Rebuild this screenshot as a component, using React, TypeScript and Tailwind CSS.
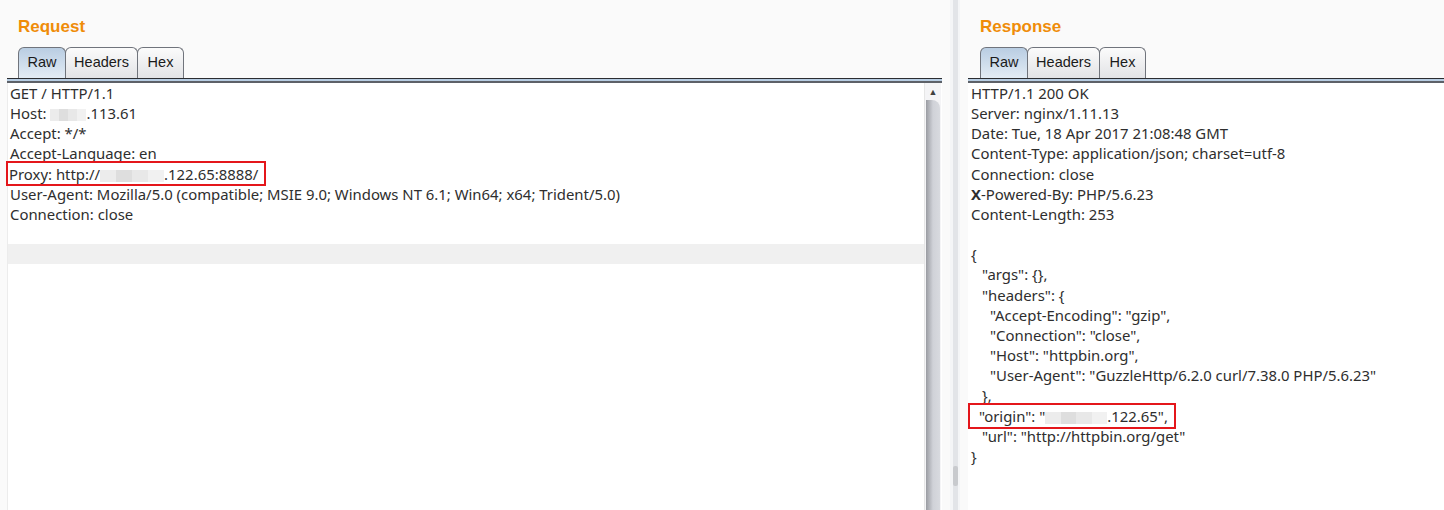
import React from "react";

const FONT = { fontFamily: '"Noto Sans", "Open Sans", sans-serif' };

function Blur({ w }: { w: number }) {
  return (
    <span className="inline-block align-middle h-[12px] relative" style={{ width: w }}>
      <span className="absolute inset-0 flex">
        <span className="flex-1 bg-[#ececec]" />
        <span className="flex-1 bg-[#dedede]" />
        <span className="flex-1 bg-[#e8e8e8]" />
        <span className="flex-1 bg-[#f1f1f1]" />
      </span>
    </span>
  );
}

function Tabs() {
  const base =
    "h-[31px] flex items-center text-[14.5px] text-[#1a1a1a] border border-b-0 border-[#70747c] rounded-t-[6px] -ml-px first:ml-0";
  return (
    <div className="flex items-end" style={{ fontFamily: '"Liberation Sans", Arial, sans-serif' }}>
      <div className={base + " w-[48px] justify-center bg-gradient-to-b from-[#b9cde2] to-[#e3ecf5]"}>Raw</div>
      <div className={base + " w-[73px] justify-center bg-gradient-to-b from-[#fbfbfb] to-[#e2e3e6]"}>Headers</div>
      <div className={base + " w-[47px] justify-center bg-gradient-to-b from-[#fbfbfb] to-[#e2e3e6]"}>Hex</div>
    </div>
  );
}

function Separator() {
  return (
    <div className="flex flex-col">
      <div className="h-px bg-[#2b2d31]" />
      <div className="h-[2px] bg-[#b7cde3]" />
      <div className="h-[2px] bg-[#5d6168]" />
    </div>
  );
}

function Title({ text }: { text: string }) {
  return (
    <div
      className="h-[47px] pt-[14px] text-[17px] font-bold text-[#ef8c09]"
      style={{ fontFamily: '"Liberation Sans", Arial, sans-serif' }}
    >
      {text}
    </div>
  );
}

const line = "h-[20.17px] leading-[20.17px] whitespace-pre";

export default function App() {
  return (
    <div className="w-[1444px] h-[510px] bg-[#fafafa] flex overflow-hidden text-[#2e2e2e]" style={FONT}>
      {/* Left panel */}
      <div className="w-[942px] flex flex-col pl-[7px]">
        <div className="pl-[11px]">
          <Title text="Request" />
          <Tabs />
        </div>
        <Separator />
        <div className="flex-1 flex bg-white border-l border-[#ececec]">
          <div className="flex-1 pt-0 text-[14.9px]">
            <div className={line + " pl-[2px]"}>GET / HTTP/1.1</div>
            <div className={line + " pl-[2px]"}>
              Host: <Blur w={36} />.113.61
            </div>
            <div className={line + " pl-[2px]"}>Accept: */*</div>
            <div className={line + " pl-[2px]"}>Accept-Language: en</div>
            <div className={line}>
              <span className="inline-block h-[25px] leading-[22px] -mt-[3px] pl-[1px] pr-[6px] border-2 border-[#e4161b] -ml-[2px]">
                Proxy: http://<Blur w={64} />.122.65:8888/
              </span>
            </div>
            <div className={line + " pl-[2px]"}>
              User-Agent: Mozilla/5.0 (compatible; MSIE 9.0; Windows NT 6.1; Win64; x64; Trident/5.0)
            </div>
            <div className={line + " pl-[2px]"}>Connection: close</div>
            <div className={line} />
            <div className={line + " bg-[#f0f0f0]"} />
          </div>
          {/* scrollbar */}
          <div className="w-[17px] mr-px flex flex-col border-l border-[#e6e6e6] bg-[#f4f4f6]">
            <div className="h-[17px] flex items-center justify-center text-[9px] text-[#404040]">▲</div>
            <div className="flex-1 ml-[1px] mr-[1px] rounded-tr-[8px] bg-gradient-to-r from-[#9a9ca2] via-[#d0d2d8] to-[#d8dadf]" />
          </div>
        </div>
      </div>

      {/* Divider */}
      <div className="w-[26px] flex justify-center">
        <div className="w-[10px] bg-[#f4f5f7] flex justify-center">
          <div className="w-[5px] bg-[#e2e4e8] flex flex-col justify-end pb-[24px]">
            <div className="h-[20px] bg-[#c8cace] rounded-[2px]" />
          </div>
        </div>
      </div>

      {/* Right panel */}
      <div className="flex-1 flex flex-col">
        <div className="pl-[12px]">
          <Title text="Response" />
          <Tabs />
        </div>
        <Separator />
        <div className="flex-1 bg-white pt-0 pl-[3px] text-[14.9px]">
          <div className={line}>HTTP/1.1 200 OK</div>
          <div className={line}>Server: nginx/1.11.13</div>
          <div className={line}>Date: Tue, 18 Apr 2017 21:08:48 GMT</div>
          <div className={line}>Content-Type: application/json; charset=utf-8</div>
          <div className={line}>Connection: close</div>
          <div className={line}>
            <span className="font-bold">X</span>-Powered-By: PHP/5.6.23
          </div>
          <div className={line}>Content-Length: 253</div>
          <div className={line} />
          <div className={line}>{"{"}</div>
          <div className={line + " pl-[11px]"}>"args": {"{}"},</div>
          <div className={line + " pl-[11px]"}>"headers": {"{"}</div>
          <div className={line + " pl-[19px]"}>"Accept-Encoding": "gzip",</div>
          <div className={line + " pl-[19px]"}>"Connection": "close",</div>
          <div className={line + " pl-[19px]"}>"Host": "httpbin.org",</div>
          <div className={line + " pl-[19px]"}>"User-Agent": "GuzzleHttp/6.2.0 curl/7.38.0 PHP/5.6.23"</div>
          <div className={line + " pl-[11px]"}>{"},"}</div>
          <div className={line}>
            <span className="inline-block h-[26px] leading-[22px] -mt-[3px] pl-[9px] pr-[6px] border-2 border-[#e4161b] -ml-[3px]">
              "origin": "<Blur w={62} />.122.65",
            </span>
          </div>
          <div className={line + " pl-[11px]"}>"url": "http://httpbin.org/get"</div>
          <div className={line}>{"}"}</div>
        </div>
      </div>
    </div>
  );
}
